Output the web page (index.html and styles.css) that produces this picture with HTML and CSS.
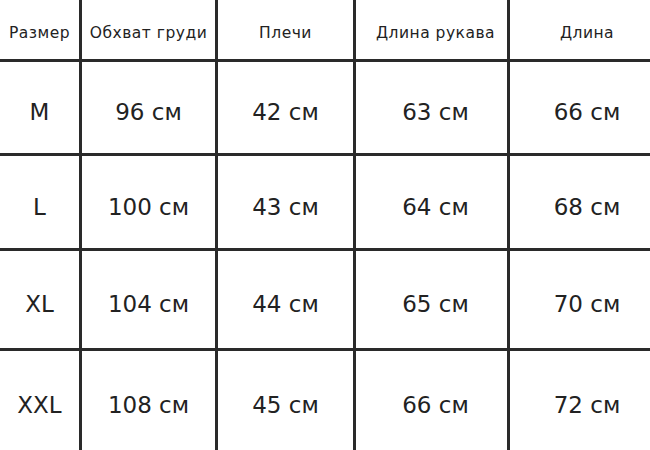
FILE: index.html
```html
<!DOCTYPE html>
<html lang="ru">
<head>
<meta charset="utf-8">
<link rel="stylesheet" href="styles.css">
</head>
<body>
<div class="viewport">
  <div class="table">
    <div class="cell head c1">Размер</div>
    <div class="cell head c2">Обхват груди</div>
    <div class="cell head c3">Плечи</div>
    <div class="cell head c4">Длина рукава</div>
    <div class="cell head c5">Длина</div>

    <div class="cell c1">M</div>
    <div class="cell c2">96 см</div>
    <div class="cell c3">42 см</div>
    <div class="cell c4">63 см</div>
    <div class="cell c5">66 см</div>

    <div class="cell c1">L</div>
    <div class="cell c2">100 см</div>
    <div class="cell c3">43 см</div>
    <div class="cell c4">64 см</div>
    <div class="cell c5">68 см</div>

    <div class="cell c1">XL</div>
    <div class="cell c2">104 см</div>
    <div class="cell c3">44 см</div>
    <div class="cell c4">65 см</div>
    <div class="cell c5">70 см</div>

    <div class="cell c1 last">XXL</div>
    <div class="cell c2 last">108 см</div>
    <div class="cell c3 last">45 см</div>
    <div class="cell c4 last">66 см</div>
    <div class="cell c5 last">72 см</div>
  </div>
</div>
</body>
</html>
```
FILE: styles.css
```css
html, body {
  margin: 0;
  padding: 0;
  background: #ffffff;
}

.viewport {
  width: 650px;
  height: 450px;
  overflow: hidden;
}

.table {
  display: grid;
  width: 664px;
  grid-template-columns: 82px 136px 138px 154px 154px;
  grid-template-rows: 62px 94px 95px 100px 99px;
  font-family: "DejaVu Sans", "Liberation Sans", sans-serif;
  color: #222222;
}

.cell {
  display: flex;
  align-items: center;
  justify-content: center;
  border-right: 3px solid #2a2a2a;
  border-bottom: 3px solid #2a2a2a;
  font-size: 23px;
  padding-top: 9px;
  white-space: nowrap;
}

.head {
  font-size: 15.5px;
  letter-spacing: 0.5px;
  padding-top: 7px;
}

.c5 {
  border-right: none;
}

.c4 {
  padding-left: 8px;
}

.last {
  border-bottom: none;
}
```
